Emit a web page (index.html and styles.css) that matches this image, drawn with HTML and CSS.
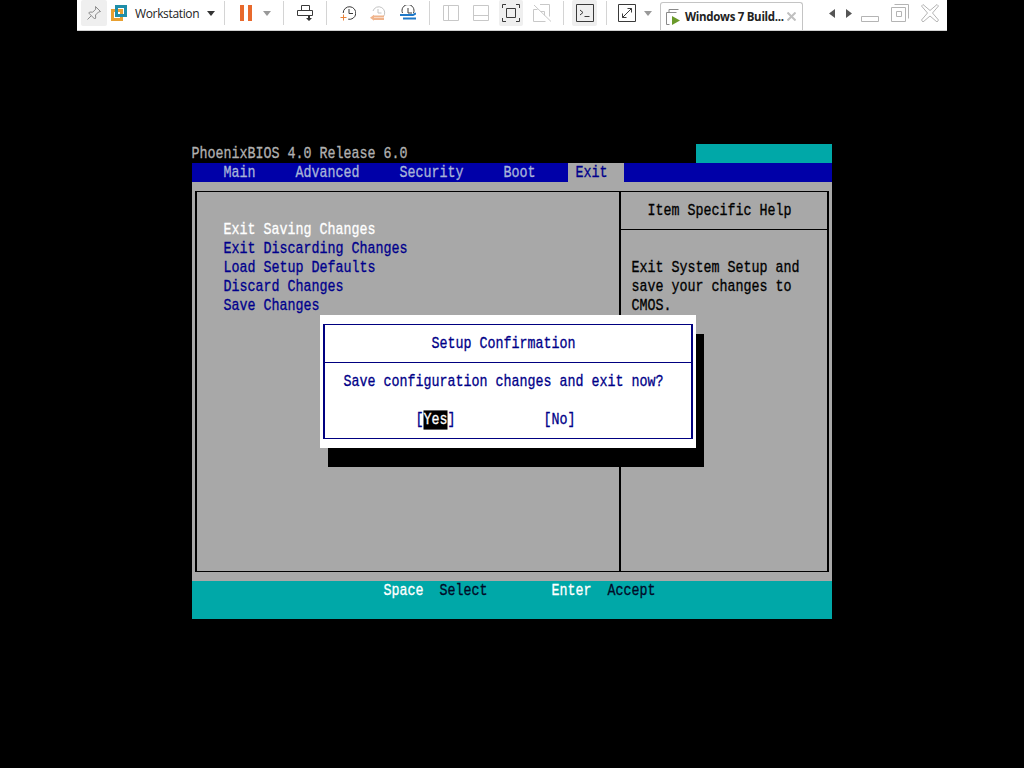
FILE: index.html
```html
<!DOCTYPE html>
<html lang="en">
<head>
<meta charset="utf-8">
<title>Windows 7 Build - Workstation</title>
<link rel="stylesheet" href="styles.css">
</head>
<body>
<header class="toolbar">
  <div class="btn btn-pin ml4"><svg class="ic16" viewBox="0 0 16 16"><path class="s-mid" d="M9.5 1.5l5 5-2 .5-3 3 .2 3-1 1-6-6 1-1 3 .2 3-3zM5 11l-3.5 3.5"/></svg></div>
  <svg class="ic16 ml4" viewBox="0 0 16 16"><rect x="1.500" y="5.500" width="9" height="9" class="logo-o"/><rect x="5.500" y="1.500" width="9" height="9" class="logo-b"/></svg>
  <span class="tb-label ml8">Workstation</span>
  <svg class="ic-arrow ml8" viewBox="0 0 8 5"><path class="f-dark" d="M0 0h8L4 5z"/></svg>
  <i class="sep ml9"></i>
  <svg class="ic-pause ml15" viewBox="0 0 12 16"><path class="f-orange" d="M0 0h4v16H0zM8 0h4v16H8z"/></svg>
  <svg class="ic-arrow ml11" viewBox="0 0 8 5"><path class="f-gray" d="M0 0h8L4 5z"/></svg>
  <i class="sep ml12"></i>
  <svg class="ic16 ml13" viewBox="0 0 16 16"><path class="s-dark" d="M4.5 .5h8v5h-8zM.5 5.500h15v5H.5z"/><path class="f-dark" d="M11 11h2v2h2l-3 3-3-3h2z"/></svg>
  <i class="sep ml13"></i>
  <svg class="ic16 ml13" viewBox="0 0 16 16"><path class="s-dark" d="M3.200 8a6.300 6.300 0 1 1 5 6.200M9 4v4.500h4"/><path class="s-orange" d="M3.500 9.500v6M.5 12.500h6"/></svg>
  <svg class="ic16 ml14" viewBox="0 0 16 16"><path class="s-faint" d="M3 6a6 6 0 1 1 10 6M8 4v4h3.500"/><path class="s-fade" d="M3 11.500h11M3 14h11"/><path class="f-fade" d="M0 12.750l4-3v6z"/></svg>
  <svg class="ic16 ml14" viewBox="0 0 16 16"><path class="s-dark" d="M2.500 8a6 6 0 1 1 11 0M8 3v5h4"/><path class="s-blue" d="M0 10h13l3-1.500M3 13.500h13"/></svg>
  <i class="sep ml13"></i>
  <svg class="ic16 ml13" viewBox="0 0 16 16"><path class="s-light" d="M.5 .5h15v15H.5zM5.500 .5v15"/></svg>
  <svg class="ic16 ml14" viewBox="0 0 16 16"><path class="s-light" d="M.5 .5h15v15H.5zM.5 10.500h15"/></svg>
  <div class="btn btn-fs ml10"><svg class="ic18" viewBox="0 0 18 18"><path class="s-dark" d="M.5 4V.5H4M14 .5h3.500V4M17.500 14v3.500H14M4 17.500H.5V14M4.500 4.500h9v9h-9z"/></svg></div>
  <svg class="ic-unity ml10" viewBox="0 0 19 18"><path class="s-light" d="M.5 5.500h4M.5 5.500v12h12M7 .5h9.500v12M1 1l17 16.500M7.500 7.500h4v4"/></svg>
  <i class="sep ml11"></i>
  <div class="btn btn-term ml8"><svg class="ic18" viewBox="0 0 18 18"><path class="s-dark" d="M.5 .5h17v17H.5z"/><path class="s-dark" d="M4 6l3 2.500L4 11M8.500 12.500h5"/></svg></div>
  <i class="sep ml9"></i>
  <svg class="ic18 ml11" viewBox="0 0 18 18"><path class="s-dark" d="M.5 .5h17v17H.5zM4.500 13.500l9-9M9.500 4.500h4v4M4.500 9.500v4h4"/></svg>
  <svg class="ic-arrow ml8" viewBox="0 0 8 5"><path class="f-gray" d="M0 0h8L4 5z"/></svg>
  <div class="tab ml8">
    <svg class="ic-tab" viewBox="0 0 15 16"><path class="s-mid" d="M3 3V.5h9.500M.5 3.500h10M.5 3.500v12h3"/><path class="f-green" d="M6 7l8 4.500L6 16z"/></svg>
    <span class="tab-label">Windows 7 Build...</span>
    <svg class="ic-x" viewBox="0 0 9 9"><path class="s-x" d="M.5 .5l8 8M8.500 .5l-8 8"/></svg>
  </div>
  <svg class="ic-nav ml26" viewBox="0 0 6 9"><path class="f-navarrow" d="M6 0v9L0 4.500z"/></svg>
  <svg class="ic-nav ml11" viewBox="0 0 6 9"><path class="f-navarrow" d="M0 0v9l6-4.500z"/></svg>
  <svg class="ic-win ml9" viewBox="0 0 18 18"><path class="s-win" d="M.5 12.500h17v5H.5z"/></svg>
  <svg class="ic-win ml12" viewBox="0 0 18 18"><path class="s-win" d="M3.500 .5h14v14M.5 3.500h14v14H.5zM5.500 7.500h5v5h-5z"/></svg>
  <svg class="ic-win ml12" viewBox="0 0 18 18"><path class="s-win" d="M2 .5l7 6 7-6 1.500 1.500-6 7 6 7-1.500 2-7-6-7 6-1.500-2 6-7-6-7z"/></svg>
</header>

<main class="bios">
  <div class="title-row">
    <div class="row title"><span class="t">PhoenixBIOS 4.0 Release 6.0</span></div>
    <div class="title-block"></div>
  </div>
  <nav class="menu">
    <div class="row menu-items"><span class="t">    Main     Advanced     Security     Boot    </span></div>
    <div class="row menu-active"><span class="t"> Exit  </span></div>
  </nav>
  <div class="body-area">
    <div class="frame">
      <section class="pane-list">
        <div class="row item-on"><span class="t">Exit Saving Changes</span></div>
        <div class="row item"><span class="t">Exit Discarding Changes</span></div>
        <div class="row item"><span class="t">Load Setup Defaults</span></div>
        <div class="row item"><span class="t">Discard Changes</span></div>
        <div class="row item"><span class="t">Save Changes</span></div>
      </section>
      <aside class="pane-help">
        <div class="help-head"><div class="row"><span class="t">Item Specific Help</span></div></div>
        <div class="help-body">
          <div class="row"><span class="t">Exit System Setup and</span></div>
          <div class="row"><span class="t">save your changes to</span></div>
          <div class="row"><span class="t">CMOS.</span></div>
        </div>
      </aside>
    </div>
  </div>
  <footer class="keys">
    <div class="row"><span class="t"><span class="key">                        Space</span>  Select        <span class="key">Enter</span>  Accept</span></div>
  </footer>

  <div class="shadow"></div>
  <div class="dialog">
    <div class="dlg-frame">
      <div class="dlg-head"><div class="row"><span class="t">           Setup Confirmation</span></div></div>
      <div class="dlg-body">
        <div class="row"><span class="t">Save configuration changes and exit now?</span></div>
        <div class="row"></div>
        <div class="row"><span class="t">         [<span class="sel">Yes</span>]           [No]</span></div>
      </div>
    </div>
  </div>
</main>
</body>
</html>
```
FILE: styles.css
```css
* { box-sizing: border-box; }
html, body { margin: 0; background: #000; }
body { width: 1024px; height: 768px; overflow: hidden; }

/* Toolbar */
.toolbar {
  display: flex; align-items: center;
  width: 870px; height: 31px; margin-left: 77px; padding-bottom: 4px;
  background: #fff; border-bottom: 1px solid #d0d0d0;
  font-family: "Open Sans", "Noto Sans", sans-serif;
  font-size: 12px; color: #222;
}
svg { display: block; flex: none; fill: none; }
.ml4 { margin-left: 4px; } .ml8 { margin-left: 8px; } .ml9 { margin-left: 9px; }
.ml10 { margin-left: 10px; } .ml11 { margin-left: 11px; } .ml12 { margin-left: 12px; }
.ml13 { margin-left: 13px; } .ml14 { margin-left: 14px; } .ml15 { margin-left: 15px; }
.ml26 { margin-left: 26px; }
.ic16 { width: 16px; height: 16px; }
.ic18 { width: 18px; height: 18px; }
.ic-arrow { width: 8px; height: 5px; }
.ic-pause { width: 12px; height: 16px; }
.ic-unity { width: 19px; height: 18px; }
.ic-nav { width: 6px; height: 9px; }
.ic-win { width: 18px; height: 18px; }
.ic-tab { width: 15px; height: 16px; }
.ic-x { width: 9px; height: 9px; margin-left: 3px; }
.sep { display: block; flex: none; width: 1px; height: 24px; background: #d4d4d4; }
.btn { display: flex; align-items: center; justify-content: center; height: 26px; background: #efefef; border-radius: 2px; }
.btn-pin { width: 26px; }
.btn-fs { width: 24px; }
.btn-term { width: 25px; }
.tb-label { width: 64px; white-space: nowrap; letter-spacing: -.35px; }
.tab {
  display: flex; align-items: center; align-self: flex-end;
  width: 143px; height: 28px; margin-bottom: -4px; padding-left: 5px;
  border: 1px solid #c4c4c4; border-bottom: 0; border-radius: 3px 3px 0 0;
}
.tab-label { margin-left: 4px; width: 99px; font-weight: 700; white-space: nowrap; font-size: 11.500px; letter-spacing: -.3px; }
.s-dark, .s-mid, .s-orange, .s-faint, .s-fade, .s-blue, .s-light, .s-x, .s-win { stroke-width: 1; fill: none; }
.s-dark { stroke: #3a3a3a; }
.s-mid { stroke: #8a8a8a; }
.s-orange { stroke: #e8843c; }
.s-faint { stroke: #c4c4c4; }
.s-fade { stroke: #f0b48c; stroke-width: 2; }
.s-blue { stroke: #1e78c8; stroke-width: 2; }
.s-light { stroke: #c8c8c8; }
.s-x { stroke: #c0c0c0; stroke-width: 2; }
.s-win { stroke: #b4b4b4; }
.f-dark { fill: #333; }
.f-gray { fill: #999; }
.f-navarrow { fill: #555; }
.f-orange { fill: #e8692c; }
.f-fade { fill: #f0b48c; }
.f-green { fill: #6a9a2a; }
.logo-o { fill: #fff; stroke: #e8a030; stroke-width: 3; }
.logo-b { fill: none; stroke: #1f8ea8; stroke-width: 3; }

/* BIOS text screen: 80 x 25 cells of 8 x 19 */
.bios {
  position: relative;
  width: 640px; height: 475px; margin: 113px 0 0 192px;
  display: flex; flex-direction: column;
  font-family: "Liberation Mono", monospace;
  font-size: 13.333px; color: #000;
}
.row { height: 19px; line-height: 19px; white-space: pre; }
.t { display: inline-block; transform: translate(-.5px, .5px) scaleY(1.28); transform-origin: center; -webkit-text-stroke: .25px currentColor; }

.title-row { display: flex; justify-content: space-between; height: 19px; }
.title { color: #b0b0b0; }
.title-block { width: 136px; background: #00a8a8; }
.menu { display: flex; height: 19px; background: #0000a8; }
.menu-items { width: 376px; color: #a8b4d8; }
.menu-active { width: 56px; background: #a8a8a8; color: #00008c; }

.body-area { flex: 1; padding: 9px 3px 9px 3px; background: #a8a8a8; }
.frame {
  display: grid; grid-template-columns: 424px 1fr; height: 100%;
  border: solid #000; border-width: 1px 2px;
}
.pane-list { padding: 28px 0 0 27px; border-right: 2px solid #000; }
.item { color: #00008c; }
.item-on { color: #fff; }
.help-head { height: 38px; padding: 9px 0 0 27px; border-bottom: 1px solid #000; }
.help-body { padding: 28px 0 0 11px; }

.keys { height: 38px; background: #00a8a8; color: #000c28; }
.key { color: #fff; }

.shadow { position: absolute; left: 136px; top: 190px; width: 376px; height: 133px; background: #000; }
.dialog { position: absolute; left: 128px; top: 171px; width: 376px; height: 133px; padding: 9px 3px; background: #fff; color: #000088; }
.dlg-frame { height: 115px; border: solid #000080; border-width: 1px 2px; }
.dlg-head { height: 38px; padding: 9px 0 0 19px; border-bottom: 1px solid #000080; }
.dlg-body { padding: 9px 0 0 19px; }
.sel { background: #000; color: #fff; }
```
